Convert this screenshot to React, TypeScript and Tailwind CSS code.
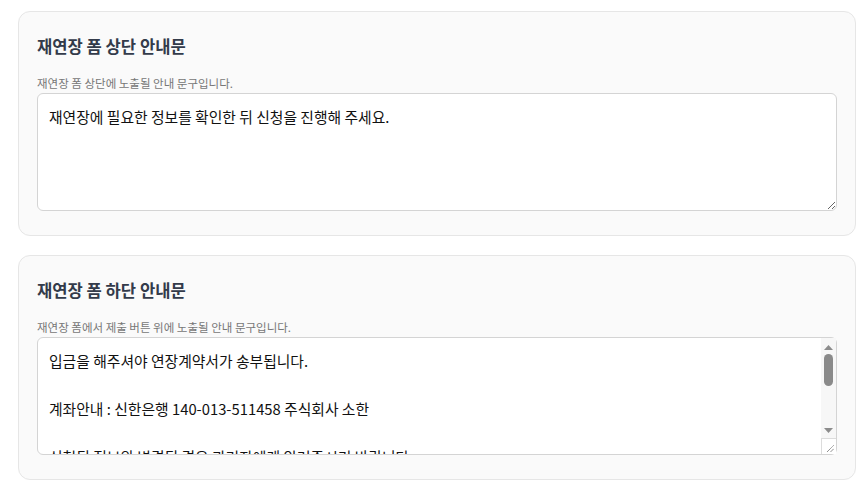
const font = '[font-family:"Noto_Sans_CJK_KR","Noto_Sans",sans-serif]'

type Notice = {
  title: string
  desc: string
  value: string
  scroll?: boolean
}

const notices: Notice[] = [
  {
    title: '재연장 폼 상단 안내문',
    desc: '재연장 폼 상단에 노출될 안내 문구입니다.',
    value: '재연장에 필요한 정보를 확인한 뒤 신청을 진행해 주세요.',
  },
  {
    title: '재연장 폼 하단 안내문',
    desc: '재연장 폼에서 제출 버튼 위에 노출될 안내 문구입니다.',
    value:
      '입금을 해주셔야 연장계약서가 송부됩니다.\n\n계좌안내 : 신한은행 140-013-511458 주식회사 소한\n\n신청된 정보와 변경된 경우 관리자에게 알려주시기 바랍니다.\n\n문의사항은 고객센터로 연락 주세요.',
    scroll: true,
  },
]

// fake classic scrollbar, drawn over the textarea's right edge
function Scrollbar() {
  return (
    <div className="pointer-events-none absolute top-[1px] right-[1px] bottom-[1px] flex w-[15px] flex-col bg-[#f7f7f7]">
      <div className="flex flex-1 flex-col items-center pt-[7px]">
        <svg width="9" height="5" viewBox="0 0 9 5">
          <path d="M0 5 L4.5 0 L9 5 Z" fill="#8c8c8c" />
        </svg>
        <div className="mt-[4px] h-[32px] w-[9px] rounded-full bg-[#8a8a8a]" />
        <div className="flex-1" />
        <svg width="9" height="5" viewBox="0 0 9 5" className="mb-[5px]">
          <path d="M0 0 L9 0 L4.5 5 Z" fill="#8c8c8c" />
        </svg>
      </div>
      <div className="relative h-[16px] border-t border-l border-[#dcdcdc] bg-white">
        <svg width="9" height="9" viewBox="0 0 9 9" className="absolute right-[1px] bottom-[1px]">
          <path d="M1 8 L8 1 M4.5 8 L8 4.5" stroke="#555" strokeWidth="0.9" strokeDasharray="1 0.6" />
        </svg>
      </div>
    </div>
  )
}

export default function App() {
  return (
    <div className={`min-h-[493px] bg-white pl-[18px] pr-[12px] pt-[11px] ${font}`}>
      <div className="flex flex-col gap-[19px]">
        {notices.map((n, i) => (
          <section
            key={i}
            className="rounded-[12px] border border-[#e6e6e6] bg-[#fafafa] px-[18px] pt-[22px] pb-[24px]"
          >
            <h2 className="text-[16.6px] leading-[24px] font-bold text-[#333b4a]">{n.title}</h2>
            <p className="mt-[17px] text-[11.5px] leading-[16px] text-[#777]">{n.desc}</p>
            <div className="relative mt-[2px]">
              <textarea
                defaultValue={n.value}
                className="block h-[118px] w-full resize-y overflow-hidden rounded-[6px] border border-[#d4d4d4] bg-white px-[11px] py-[11px] text-[14.8px] leading-[24px] text-[#111] outline-none"
              />
              {n.scroll && <Scrollbar />}
            </div>
          </section>
        ))}
      </div>
    </div>
  )
}
